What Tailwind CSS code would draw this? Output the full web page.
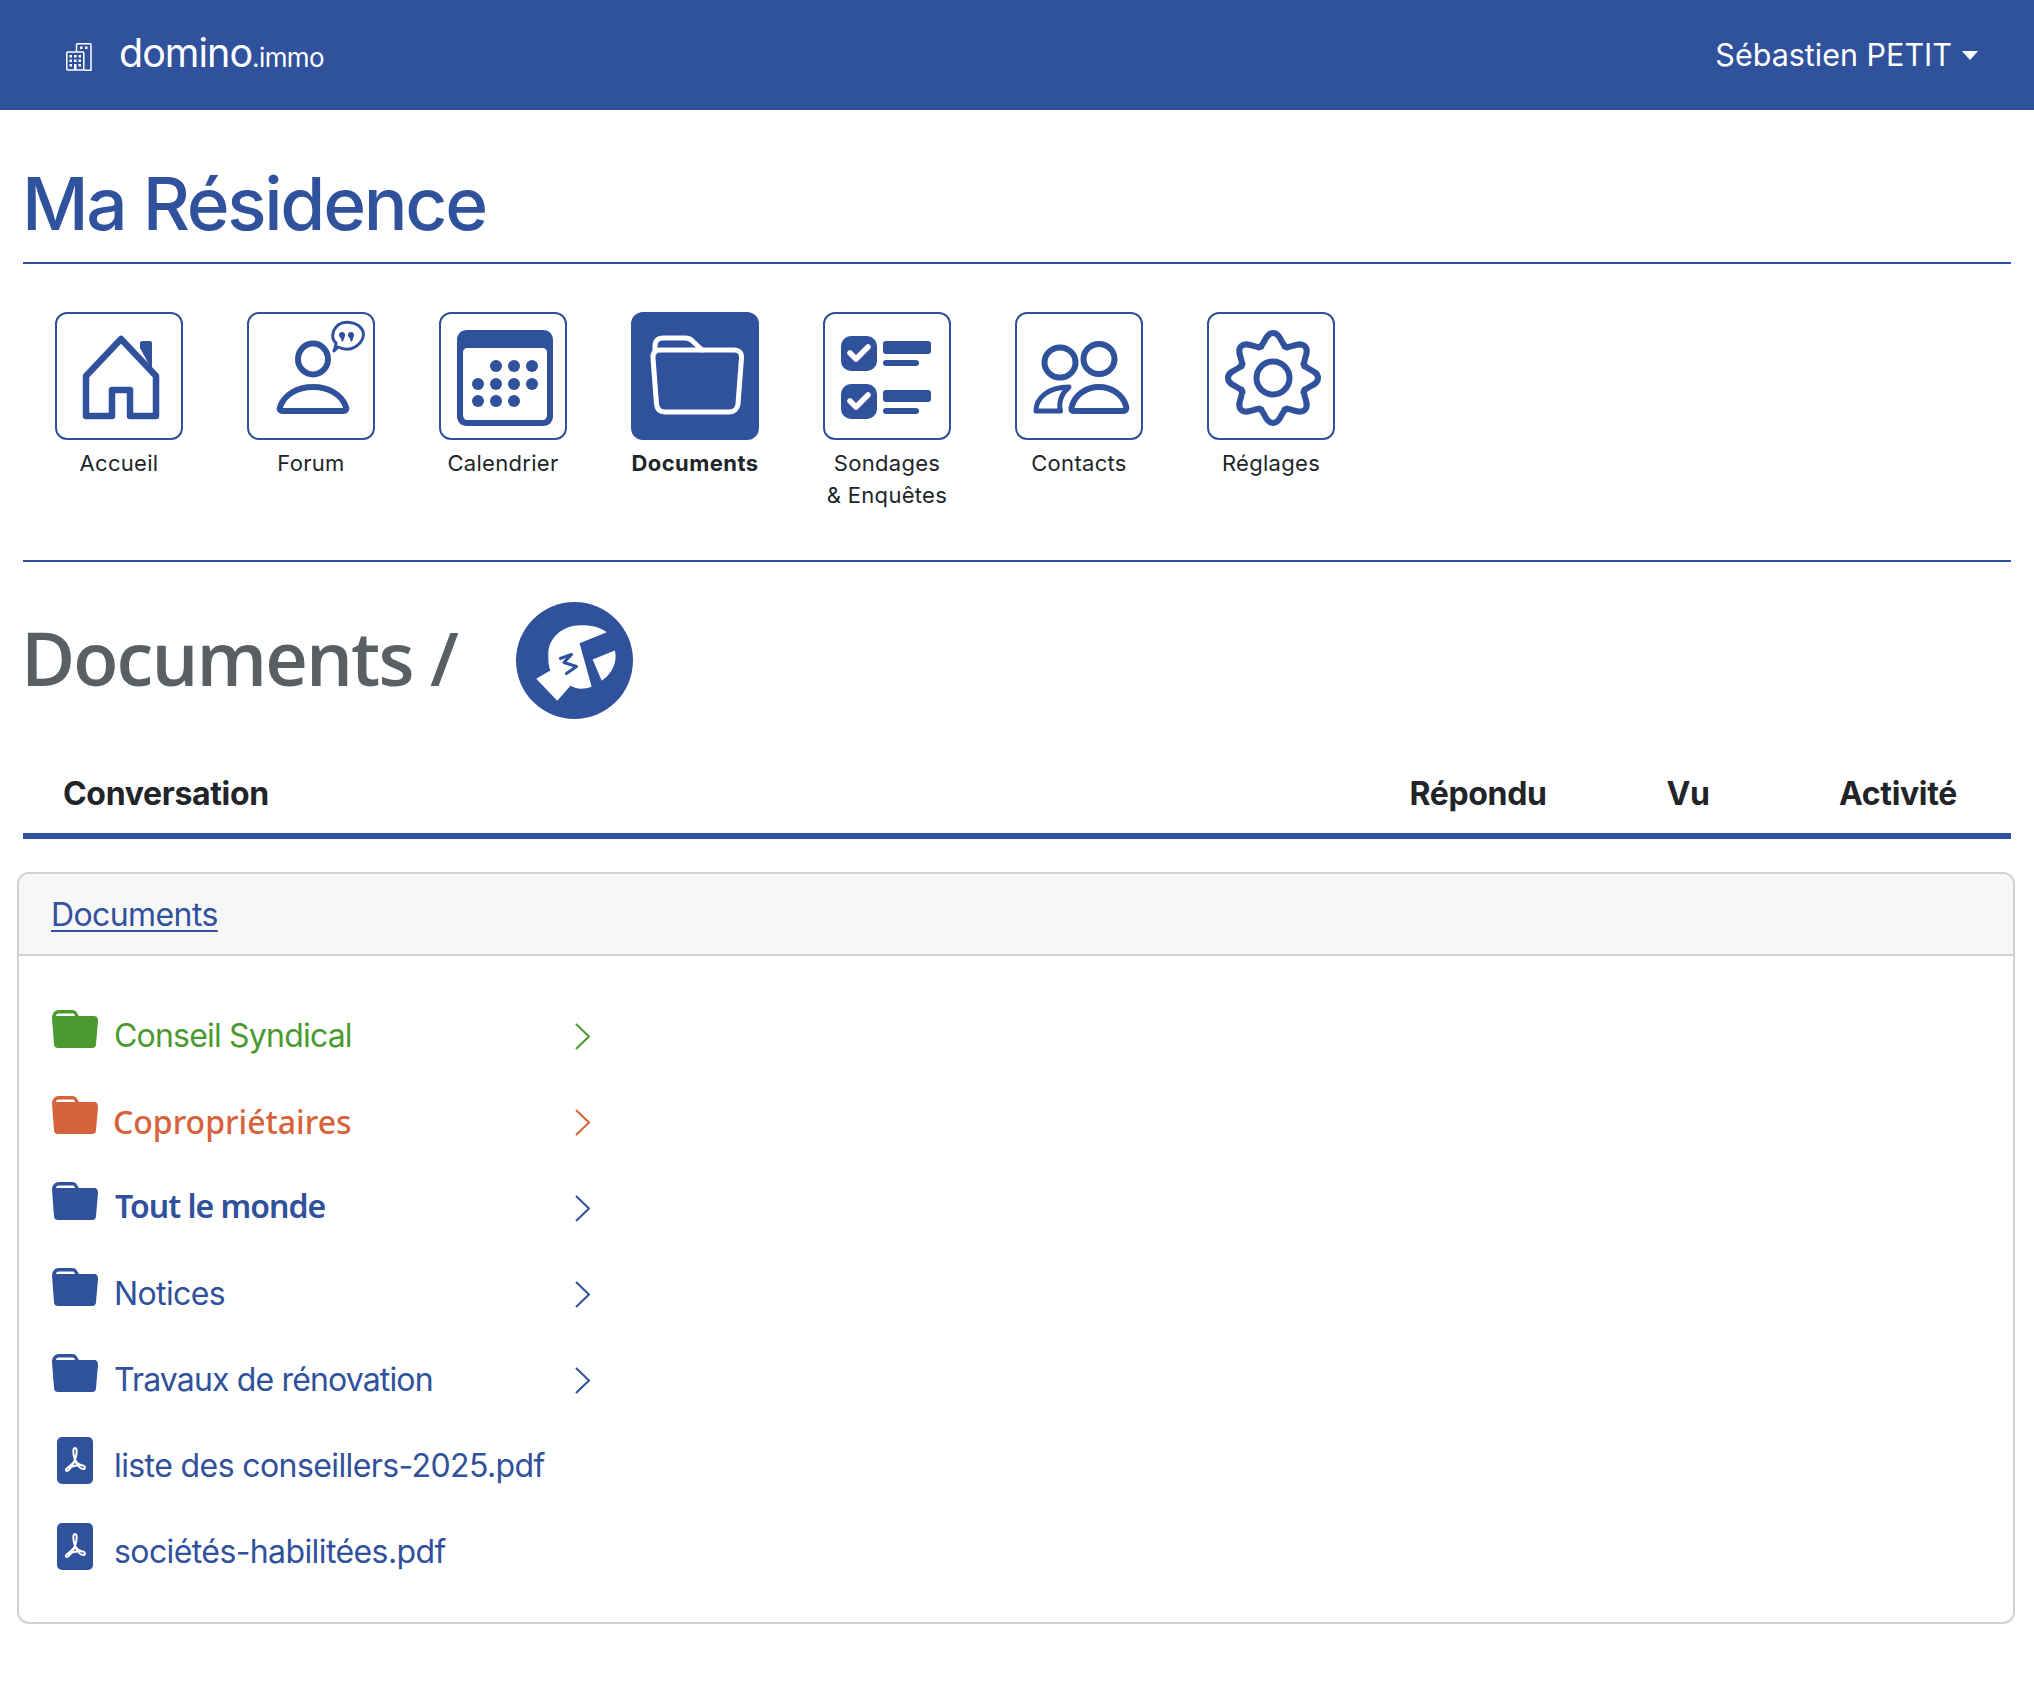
<!DOCTYPE html>
<html lang="fr">
<head>
  <meta charset="UTF-8" />
  <title>domino.immo | Ma Résidence</title>
  <script src="https://cdn.jsdelivr.net/npm/@tailwindcss/browser@4"></script>
</head>
<body class="bg-white font-['Inter','Liberation_Sans',sans-serif] text-[#212529]">

  <!-- Barre du haut -->
  <header class="h-[110px] bg-[#30519c] flex items-center justify-between pl-[66px] pr-[56px] text-white">
    <div class="flex items-center">
      <svg class="w-[26px] h-[28px] mt-[3px]" viewBox="0 0 26 28" fill="none" stroke="white" stroke-width="1.5">
        <rect x="0.75" y="9" width="17" height="18" rx="1" />
        <path d="M10.5 8.5V1.7C10.5 1.2 11 .8 11.5 .8H24C24.6 .8 25 1.2 25 1.7V27.2H18" />
        <g fill="white" stroke="none">
          <rect x="3.5" y="12" width="2.5" height="2.5" /><rect x="8" y="12" width="2.5" height="2.5" /><rect x="12.5" y="12" width="2.5" height="2.5" />
          <rect x="3.5" y="16.5" width="2.5" height="2.5" /><rect x="8" y="16.5" width="2.5" height="2.5" /><rect x="12.5" y="16.5" width="2.5" height="2.5" />
          <rect x="3.5" y="21" width="2.5" height="2.5" /><rect x="8" y="21" width="2.5" height="6" /><rect x="12.5" y="21" width="2.5" height="2.5" />
          <rect x="14" y="3.5" width="2.5" height="2.5" /><rect x="19" y="3.5" width="2.5" height="2.5" />
        </g>
      </svg>
      <span class="ml-[27px] mb-[2px] text-[39.5px] leading-none tracking-[-1px]">domino<span class="text-[26px] tracking-[-0.6px]">.immo</span></span>
    </div>
    <div class="flex items-center gap-[10px]">
      <span class="text-[30.5px] leading-none">Sébastien PETIT</span>
      <span class="w-0 h-0 border-x-[8px] border-t-[9px] border-x-transparent border-t-white"></span>
    </div>
  </header>

  <main class="px-[23px]">
    <h1 class="h-[154px] pt-[50px] border-b-2 border-[#30519c] text-[73px] leading-[88px] font-medium tracking-[-2.3px] text-[#30519c]"><span class="inline-block -ml-[1px]">Ma Résidence</span></h1>

    <!-- Menu -->
    <nav class="h-[298px] pt-[48px] flex border-b-2 border-[#30519c] text-center text-[22px] leading-[32px] tracking-[0.3px]">
      <a class="w-[192px] flex flex-col items-center">
        <span class="w-[128px] h-[128px] rounded-[12px] border-2 border-[#30519c]">
          <svg class="-m-[2px] w-[128px] h-[128px]" viewBox="0 0 128 128" fill="none" stroke="#30519c" stroke-width="6.500" stroke-linejoin="round">
            <path d="M66 27L31 64V104H57V78H75V104H101V64Z" />
            <path d="M85 36V31C85 30 86 29 87 29H95C96 29 97 30 97 31V58Z" fill="#30519c" stroke="none" />
          </svg>
        </span>
        <span class="mt-[7px]">Accueil</span>
      </a>
      <a class="w-[192px] flex flex-col items-center">
        <span class="w-[128px] h-[128px] rounded-[12px] border-2 border-[#30519c]">
          <svg class="-m-[2px] w-[128px] h-[128px]" viewBox="0 0 128 128" fill="none" stroke="#30519c" stroke-width="6" stroke-linejoin="round">
            <ellipse cx="66" cy="47" rx="15" ry="15.5" />
            <path d="M36 99C33 99 32 97 33 95C37 83 50 75 66 75S95 83 99 95C100 97 99 99 96 99Z" />
            <path d="M88 38C89 37 90 36 91 35C97 38 103 38 108 35C116 30 119 22 114 16C109 10 97 8 90 14C85 19 84 27 89 31C89 34 88 36 87 39Z" stroke-width="3" />
            <g fill="#30519c" stroke="none">
              <circle cx="95" cy="23" r="3" /><path d="M93 24L97.5 23C97.5 27 96.5 29 95 30Z" />
              <circle cx="104" cy="23" r="3" /><path d="M102 24L106.5 23C106.5 27 105.5 29 104 30Z" />
            </g>
          </svg>
        </span>
        <span class="mt-[7px]">Forum</span>
      </a>
      <a class="w-[192px] flex flex-col items-center">
        <span class="w-[128px] h-[128px] rounded-[12px] border-2 border-[#30519c]">
          <svg class="-m-[2px] w-[128px] h-[128px]" viewBox="0 0 128 128" fill="#30519c">
            <path fill-rule="evenodd" d="M28 18H104C110 18 114 22 114 28V104C114 110 110 114 104 114H28C22 114 18 110 18 104V28C18 22 22 18 28 18ZM28 36C26 36 24 38 24 40V103C24 106 26 108 28 108H104C106 108 108 106 108 103V40C108 38 106 36 104 36Z" />
            <circle cx="57" cy="54" r="6" /><circle cx="75" cy="54" r="6" /><circle cx="93" cy="54" r="6" />
            <circle cx="39" cy="72" r="6" /><circle cx="57" cy="72" r="6" /><circle cx="75" cy="72" r="6" /><circle cx="93" cy="72" r="6" />
            <circle cx="39" cy="89" r="6" /><circle cx="57" cy="89" r="6" /><circle cx="75" cy="89" r="6" />
          </svg>
        </span>
        <span class="mt-[7px]">Calendrier</span>
      </a>
      <a class="w-[192px] flex flex-col items-center font-bold tracking-[0.45px]">
        <span class="w-[128px] h-[128px] rounded-[12px] bg-[#30519c]">
          <svg class="w-[128px] h-[128px]" viewBox="0 0 128 128" fill="none" stroke="white" stroke-width="5" stroke-linejoin="round" stroke-linecap="round">
            <path d="M29 38H103C108 38 111 41 110.5 46L107 92C106.5 97 103 100 98 100H34C29 100 26 97 25.5 92L22 46C21.5 41 24 38 29 38Z" />
            <path d="M24 40V34C24 29 27 26 32 26H54C58 26 60 27 62 29.5L71 38" />
          </svg>
        </span>
        <span class="mt-[7px]">Documents</span>
      </a>
      <a class="w-[192px] flex flex-col items-center">
        <span class="w-[128px] h-[128px] rounded-[12px] border-2 border-[#30519c]">
          <svg class="-m-[2px] w-[128px] h-[128px]" viewBox="0 0 128 128" fill="#30519c">
            <rect x="18" y="24" width="36" height="35" rx="10" />
            <rect x="60" y="29" width="48" height="13" rx="3" />
            <rect x="60" y="48" width="36" height="6" rx="3" />
            <rect x="18" y="72" width="36" height="35" rx="10" />
            <rect x="60" y="78" width="48" height="12" rx="3" />
            <rect x="60" y="96" width="36" height="6" rx="3" />
            <path d="M27 41L33 47L45 35M27 89L33 95L45 83" fill="none" stroke="white" stroke-width="5.5" stroke-linecap="round" stroke-linejoin="round" />
          </svg>
        </span>
        <span class="mt-[7px]">Sondages<br />&amp; Enquêtes</span>
      </a>
      <a class="w-[192px] flex flex-col items-center">
        <span class="w-[128px] h-[128px] rounded-[12px] border-2 border-[#30519c]">
          <svg class="-m-[2px] w-[128px] h-[128px]" viewBox="0 0 128 128" fill="none" stroke="#30519c" stroke-width="6" stroke-linejoin="round">
            <ellipse cx="45" cy="50.5" rx="15.5" ry="15" />
            <ellipse cx="84" cy="47" rx="15.5" ry="15" />
            <path d="M59 99C56 99 56 97 57 94C60 83 71 75 84 75S108 83 111 94C112 97 111 99 108 99Z" />
            <path d="M21 99C21 86 33 75 54 75C47 81 43 90 45.5 99Z" stroke-width="5" />
          </svg>
        </span>
        <span class="mt-[7px]">Contacts</span>
      </a>
      <a class="w-[192px] flex flex-col items-center">
        <span class="w-[128px] h-[128px] rounded-[12px] border-2 border-[#30519c]">
          <svg class="-m-[2px] w-[128px] h-[128px]" viewBox="0 0 128 128" fill="none" stroke="#30519c" stroke-width="6" stroke-linecap="round">
            <path d="M52 35.500C58 33 58 21 66 21S74 33 80 35.500" />
            <path d="M52 35.500C58 33 58 21 66 21S74 33 80 35.500" transform="rotate(45 66 66)" />
            <path d="M52 35.500C58 33 58 21 66 21S74 33 80 35.500" transform="rotate(90 66 66)" />
            <path d="M52 35.500C58 33 58 21 66 21S74 33 80 35.500" transform="rotate(135 66 66)" />
            <path d="M52 35.500C58 33 58 21 66 21S74 33 80 35.500" transform="rotate(180 66 66)" />
            <path d="M52 35.500C58 33 58 21 66 21S74 33 80 35.500" transform="rotate(225 66 66)" />
            <path d="M52 35.500C58 33 58 21 66 21S74 33 80 35.500" transform="rotate(270 66 66)" />
            <path d="M52 35.500C58 33 58 21 66 21S74 33 80 35.500" transform="rotate(315 66 66)" />
            <circle cx="66" cy="66" r="16.5" />
          </svg>
        </span>
        <span class="mt-[7px]">Réglages</span>
      </a>
    </nav>

    <!-- Titre de la page -->
    <div class="mt-[39px] h-[116px] flex items-center">
      <h2 class="-ml-[2px] mb-[2px] w-[495px] font-['Open_Sans',sans-serif] text-[74px] leading-none font-semibold tracking-[-1.9px] text-[#5a5f63]">Documents /</h2>
      <svg class="mt-[2px] w-[117px] h-[117px]" viewBox="0 0 116 116">
        <circle cx="58" cy="58" r="58" fill="#30519c" />
        <path fill="white" d="M90 30C82 24 74 23 64 23C46 23 32 36 32 51C32 58 32 63 34 68L20 76L41 98L54 83C58 85 61 86 64 86C68 86 72 85 75 84L63 41Z" />
        <path fill="white" d="M76 57L98 48C99 52 99 56 98 60C96 68 91 74 85 78Z" />
        <path d="M44 56L55 52L47.5 60L60 64L50 71" fill="none" stroke="#30519c" stroke-width="3" stroke-linejoin="round" stroke-linecap="round" />
      </svg>
    </div>

    <!-- En-têtes du tableau -->
    <div class="h-[122px] pt-[53px] flex border-b-[6px] border-[#30519c] text-[32px] leading-[48px] font-bold tracking-[-0.33px]">
      <div class="flex-1 pl-[40px]">Conversation</div>
      <div class="w-[210px] text-center">Répondu</div>
      <div class="w-[210px] text-center">Vu</div>
      <div class="w-[210px] text-center mr-[8px]">Activité</div>
    </div>

    <!-- Carte documents -->
    <section class="mt-[33px] -ml-[6px] w-[1998px] h-[752px] rounded-[12px] border-2 border-[#d2d2d2] overflow-hidden text-[32px] leading-[48px] text-[#30519c] tracking-[-0.6px]">
      <div class="h-[82px] pl-[32px] pt-[17px] bg-[#f7f7f7] border-b-2 border-[#d2d2d2]">
        <a class="underline underline-offset-[4px] decoration-2">Documents</a>
      </div>
      <ul class="pt-[37px] pl-[33px]">
        <li class="h-[86px] w-[538px] flex items-center text-[#4a9a2f]">
          <svg class="w-[46px] h-[38px] mb-[14px] shrink-0" viewBox="0 0 46 38"><path fill="currentColor" fill-rule="evenodd" d="M7 0H20C23 0 24 1 25 3L27 6H42C45 6 46 8 46 11L44 34C44 37 42 38 40 38H6C4 38 2 37 2 34L0 8C0 3 3 0 7 0ZM4 6C4 4.5 5 3.5 7 3.5H20C22 3.5 22.5 4 23 6Z" /></svg>
          <span class="ml-[16px] flex-1 tracking-[-0.8px]">Conseil Syndical</span>
          <svg class="w-[15px] h-[27px]" viewBox="0 0 15 27" fill="none" stroke="currentColor" stroke-width="2"><path d="M1 1L14 13.5L1 26" /></svg>
        </li>
        <li class="h-[86px] w-[538px] flex items-center text-[#d6633c]">
          <svg class="w-[46px] h-[38px] mb-[14px] shrink-0" viewBox="0 0 46 38"><path fill="currentColor" fill-rule="evenodd" d="M7 0H20C23 0 24 1 25 3L27 6H42C45 6 46 8 46 11L44 34C44 37 42 38 40 38H6C4 38 2 37 2 34L0 8C0 3 3 0 7 0ZM4 6C4 4.5 5 3.5 7 3.5H20C22 3.5 22.5 4 23 6Z" /></svg>
          <span class="ml-[15px] flex-1 font-['Noto_Sans',sans-serif] font-medium tracking-[0px]">Copropriétaires</span>
          <svg class="w-[15px] h-[27px]" viewBox="0 0 15 27" fill="none" stroke="currentColor" stroke-width="2"><path d="M1 1L14 13.5L1 26" /></svg>
        </li>
        <li class="h-[86px] w-[538px] flex items-center">
          <svg class="w-[46px] h-[38px] mb-[14px] shrink-0" viewBox="0 0 46 38"><path fill="currentColor" fill-rule="evenodd" d="M7 0H20C23 0 24 1 25 3L27 6H42C45 6 46 8 46 11L44 34C44 37 42 38 40 38H6C4 38 2 37 2 34L0 8C0 3 3 0 7 0ZM4 6C4 4.5 5 3.5 7 3.5H20C22 3.5 22.5 4 23 6Z" /></svg>
          <span class="ml-[17px] flex-1 mb-[5px] font-['Noto_Sans',sans-serif] font-semibold tracking-[-1px]">Tout le monde</span>
          <svg class="w-[15px] h-[27px]" viewBox="0 0 15 27" fill="none" stroke="currentColor" stroke-width="2"><path d="M1 1L14 13.5L1 26" /></svg>
        </li>
        <li class="h-[86px] w-[538px] flex items-center">
          <svg class="w-[46px] h-[38px] mb-[14px] shrink-0" viewBox="0 0 46 38"><path fill="currentColor" fill-rule="evenodd" d="M7 0H20C23 0 24 1 25 3L27 6H42C45 6 46 8 46 11L44 34C44 37 42 38 40 38H6C4 38 2 37 2 34L0 8C0 3 3 0 7 0ZM4 6C4 4.5 5 3.5 7 3.5H20C22 3.5 22.5 4 23 6Z" /></svg>
          <span class="ml-[16px] flex-1">Notices</span>
          <svg class="w-[15px] h-[27px]" viewBox="0 0 15 27" fill="none" stroke="currentColor" stroke-width="2"><path d="M1 1L14 13.5L1 26" /></svg>
        </li>
        <li class="h-[86px] w-[538px] flex items-center">
          <svg class="w-[46px] h-[38px] mb-[14px] shrink-0" viewBox="0 0 46 38"><path fill="currentColor" fill-rule="evenodd" d="M7 0H20C23 0 24 1 25 3L27 6H42C45 6 46 8 46 11L44 34C44 37 42 38 40 38H6C4 38 2 37 2 34L0 8C0 3 3 0 7 0ZM4 6C4 4.5 5 3.5 7 3.5H20C22 3.5 22.5 4 23 6Z" /></svg>
          <span class="ml-[16px] flex-1 tracking-[-0.85px]">Travaux de rénovation</span>
          <svg class="w-[15px] h-[27px]" viewBox="0 0 15 27" fill="none" stroke="currentColor" stroke-width="2"><path d="M1 1L14 13.5L1 26" /></svg>
        </li>
        <li class="h-[86px] w-[538px] flex items-center">
          <svg class="ml-[5px] w-[36px] h-[47px] mb-[12px] shrink-0" viewBox="0 0 36 47"><rect width="36" height="47" rx="5" fill="currentColor" /><path d="M18 11C15.5 11 16 17 18 23C16 27 13 29 10 31C8 32.5 9 35 11 33.500C14 31.500 16 28 18 23C20 26 22 28 26 28.500C28.500 29 28.500 32 26.500 32C23 32 20.500 30 18 23C20 17 20.500 11 18 11ZM11 32C15 29 21 28 26.500 28.500" fill="none" stroke="white" stroke-width="2" /></svg>
          <span class="ml-[21px] whitespace-nowrap">liste des conseillers-2025.pdf</span>
        </li>
        <li class="h-[86px] w-[538px] flex items-center">
          <svg class="ml-[5px] w-[36px] h-[47px] mb-[12px] shrink-0" viewBox="0 0 36 47"><rect width="36" height="47" rx="5" fill="currentColor" /><path d="M18 11C15.5 11 16 17 18 23C16 27 13 29 10 31C8 32.5 9 35 11 33.500C14 31.500 16 28 18 23C20 26 22 28 26 28.500C28.500 29 28.500 32 26.500 32C23 32 20.500 30 18 23C20 17 20.500 11 18 11ZM11 32C15 29 21 28 26.500 28.500" fill="none" stroke="white" stroke-width="2" /></svg>
          <span class="ml-[21px] whitespace-nowrap">sociétés-habilitées.pdf</span>
        </li>
      </ul>
    </section>
  </main>
</body>
</html>
